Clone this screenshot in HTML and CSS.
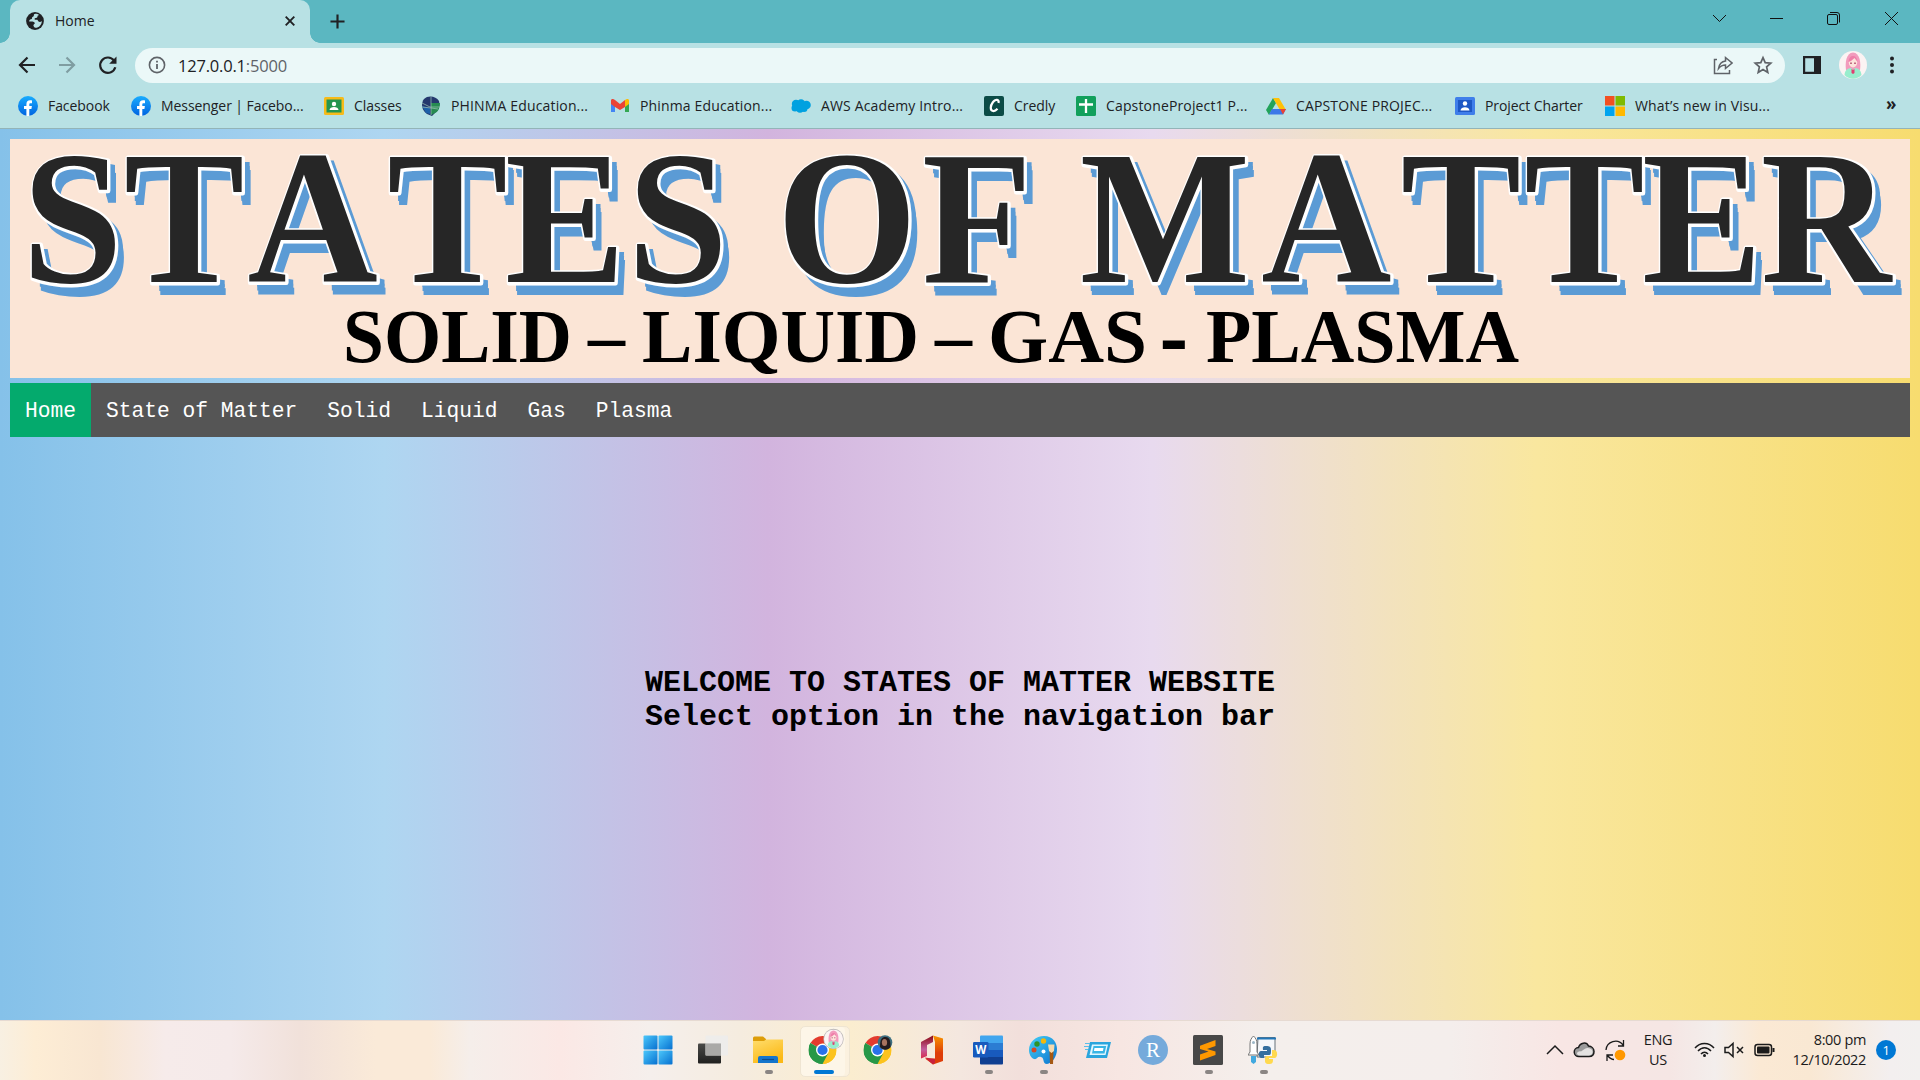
FILE: index.html
```html
<!DOCTYPE html>
<html lang="en">
<head>
<meta charset="utf-8">
<title>Home</title>
<link rel="stylesheet" href="styles.css">
</head>
<body>
<svg width="0" height="0" class="defs" aria-hidden="true">
  <defs>
    <linearGradient id="fbg" x2="0" y2="1"><stop stop-color="#18acfe"/><stop offset="1" stop-color="#0163e0"/></linearGradient>
    <linearGradient id="wing" x2="1" y2="1"><stop stop-color="#4cc8fb"/><stop offset="1" stop-color="#0670d0"/></linearGradient>
    <linearGradient id="fold" x2=".5" y2="1"><stop stop-color="#ffdd6d"/><stop offset="1" stop-color="#fbb916"/></linearGradient>
    <linearGradient id="offg" x2="0" y2="1"><stop stop-color="#f89500"/><stop offset=".6" stop-color="#de3d08"/></linearGradient>
    <linearGradient id="offl" x2="0" y2="1"><stop stop-color="#8c0a12"/><stop offset=".6" stop-color="#c25d9c"/><stop offset="1" stop-color="#d8294b"/></linearGradient>
    <linearGradient id="pal" x2="1" y2="1"><stop stop-color="#45d0f6"/><stop offset="1" stop-color="#0a72cf"/></linearGradient>
    <linearGradient id="tv" x2="0" y2="1"><stop stop-color="#4a4a48"/><stop offset="1" stop-color="#20201f"/></linearGradient>
    <symbol id="fb" viewBox="0 0 20 20"><circle cx="10" cy="10" r="10" fill="url(#fbg)"/><path d="M8.400 20v-7H6v-3h2.400V8.300c0-2.600 1.300-4 3.700-4 .8 0 1.500.1 1.900.2V7.200h-1.300c-1.100 0-1.400.5-1.400 1.400V10h2.600l-.5 3h-2.100v7z" fill="#fff"/></symbol>
    <symbol id="chrome" viewBox="0 0 28 28"><path d="M14 14 1.900 7A14 14 0 0 1 26.100 7z" fill="#e33b2e"/><path d="M14 14 26.100 7A14 14 0 0 1 14 28z" fill="#fcc31e"/><path d="M14 14v14A14 14 0 0 1 1.900 7z" fill="#279847"/><path d="M14 7.500h12.400A14 14 0 0 1 14 28l5.600-10.500z" fill="#fcc31e"/><path d="M1.900 7 8.400 17.200 14 20l5.600-2.500L14 28A14 14 0 0 1 1.900 7z" fill="#279847"/><circle cx="14" cy="14" r="6.500" fill="#fff"/><circle cx="14" cy="14" r="5.100" fill="#2972ea"/></symbol>
    <symbol id="girl" viewBox="0 0 28 28"><circle cx="14" cy="14" r="14" fill="#fbf3f3"/><path d="M7 19C6 12 7 2 14 1.500 21 2 22 12 21 19l-3 2h-8z" fill="#f29bbd"/><ellipse cx="14" cy="11.500" rx="4.200" ry="5" fill="#fde3dc"/><path d="M9.500 11C10 6 12 5 14 5s4 1 4.500 6L15.500 7 12 10z" fill="#ee7fa9"/><path d="M12 11.500v1.500m4-1.500v1.500" stroke="#a73a5d" stroke-width="1.400"/><path d="M5.500 24c.5-5 3-6.500 6.500-7l2 2 2-2c3.500.5 6 2 6.500 7-5 5-12 5-17 0z" fill="#98edcd"/><path d="m12.500 18 1.500 1 1.500-1v4l-1.500 1-1.500-1z" fill="#df3f71"/></symbol>
  </defs>
</svg>

<header class="browser">
  <div class="tabs">
    <div class="tab">
      <svg class="globe" viewBox="0 0 18 18"><circle cx="9" cy="9" r="8.900" fill="#202124"/><path d="M9.500 1.800c-3 .5-.5 2-2.500 3-2 .5.200 2-2 2.500C3.500 7.500 3 9 3.200 9.500c1.800.3 3.800-.5 5.300 1 1.200 1.500-1.500 1.700-1 3.300.3 1.200 1 1.800 2 2 3.500 0 6.300-3 6.300-6.800-1.500 1.500-3.500 1-4-.5C11.500 7 9 8.500 8.500 7c.3-1.500 3-.5 3-2.500 0-1.200 1-1.200 1.500-1.500C12 2 10.500 1.800 9.500 1.800z" fill="#b8e1e4"/></svg>
      <span class="tab-title">Home</span>
      <svg class="tab-close" viewBox="0 0 10 10"><path d="m.7.7 8.600 8.600m0-8.600L.7 9.300" stroke="#202124" stroke-width="1.900"/></svg>
    </div>
    <svg class="plus" viewBox="0 0 16 16"><path d="M8 .5v15M.5 8h15" stroke="#202124" stroke-width="2.300"/></svg>
    <svg class="win-buttons" viewBox="0 0 190 20" fill="none" stroke="#111"><path d="m1 7 6.500 6.500L14 7M58 10.500h13"/><rect x="115.500" y="6.500" width="10" height="10" rx="1.500"/><path d="M118 4.500h7a2.500 2.500 0 0 1 2.500 2.500v7.500M173 4l13 13m0-13-13 13"/></svg>
  </div>

  <div class="toolbar">
    <svg class="nav-icons" viewBox="0 0 100 20" fill="none" stroke-width="2.200"><path d="M17 10H2m7.500-7.500L2 10l7.500 7.500" stroke="#202124"/><path d="M41 10h15m-7.500-7.500L56 10l-7.500 7.500" stroke="#7f9da1"/><path d="M96 5.500a7.700 7.700 0 1 0 1.300 6.800" stroke="#202124"/><path d="M98.500 1.500v7.300h-7.300z" fill="#202124"/></svg>
    <div class="omnibox">
      <svg class="info" viewBox="0 0 18 18"><circle cx="9" cy="9" r="7.600" fill="none" stroke="#5f6368" stroke-width="1.600"/><path d="M9 8v5M9 4.800v1.800" stroke="#5f6368" stroke-width="1.800"/></svg>
      <span class="url">127.0.0.1<span class="port">:5000</span></span>
      <svg class="share" viewBox="0 0 20 20" fill="none" stroke="#5f6368" stroke-width="1.500"><path d="M4 4.500H1.500v14h15V15M5.500 13.500c.7-4.500 3-7 7-7.500V2.500L19 8l-6.500 5.500V10c-3 0-5 1-7 3.500z"/></svg>
      <svg class="star" viewBox="0 0 20 20" fill="none" stroke="#5f6368" stroke-width="1.700"><path d="m10 2.600 2.200 5.100 5.600.5-4.200 3.700 1.200 5.500-4.800-2.900-4.800 2.900 1.200-5.500-4.200-3.700 5.600-.5z"/></svg>
    </div>
    <svg class="panel" viewBox="0 0 18 18"><path d="M0 0h18v18H0zm2.200 2.200v13.600H11V2.200z" fill="#202124" fill-rule="evenodd"/></svg>
    <svg class="avatar"><use href="#girl"/></svg>
    <svg class="dots" viewBox="0 0 6 18" fill="#202124"><circle cx="3" cy="2.500" r="2"/><circle cx="3" cy="9" r="2"/><circle cx="3" cy="15.500" r="2"/></svg>
  </div>

  <nav class="bookmarks">
    <a><svg><use href="#fb"/></svg>Facebook</a>
    <a><svg><use href="#fb"/></svg>Messenger | Facebo...</a>
    <a><svg viewBox="0 0 20 20"><rect y="1" width="20" height="18" rx="1.500" fill="#f7bb1a"/><path d="M2.500 3.500h15v13h-15z" fill="#23954f"/><circle cx="10" cy="8" r="2.200" fill="#fff"/><path d="M5.500 14c0-4 9-4 9 0z" fill="#fff"/></svg>Classes</a>
    <a class="wide"><svg viewBox="0 0 20 20"><path d="M3 3C7-1 15 0 18 5c1 5 0 8-3 11l-4 4-5-2C0 14 0 7 3 3z" fill="#24386d"/><path d="M10 7h9c0 5-2 9-5 10l-4 2z" fill="#278b51"/><path d="M1 10l8 2v6l-4-1z" fill="#1d60a8"/><path d="m1 7 8 4h10M10 1v18M1 11l9 1 7 1" stroke="#9fc5b7" fill="none" stroke-width=".7"/></svg>PHINMA Education...</a>
    <a class="wide"><svg viewBox="0 0 20 20"><path d="M1 5v11h4V8z" fill="#4285f4"/><path d="M15 8v8h4V5z" fill="#34a853"/><path d="M15 5.500V11l4-3V4.500C19 3 17 2.500 15 4z" fill="#fbbc04"/><path d="M1 4.500V8l4 3 5 3 5-3V4l-5 4-5-4C3 2.500 1 3 1 4.500z" fill="#ea4335"/></svg>Phinma Education...</a>
    <a class="wide"><svg viewBox="0 0 20 20"><g fill="#00a1e0"><circle cx="5" cy="8" r="4.200"/><circle cx="10" cy="7.500" r="4.200"/><circle cx="15.500" cy="9" r="4.300"/><circle cx="4" cy="12" r="3.500"/><circle cx="9" cy="13" r="3.700"/><circle cx="13" cy="12.500" r="3.500"/></g></svg>AWS Academy Intro...</a>
    <a><svg viewBox="0 0 20 20"><rect width="20" height="20" rx="2" fill="#0b4b46"/><path d="M14.500 7c1-3.500-3-4.500-5.500-1-3 4-3 8.500 0 9 1.500.2 3-.6 4.500-2.200" fill="none" stroke="#fff" stroke-width="2.200"/></svg>Credly</a>
    <a class="wide"><svg viewBox="0 0 20 20"><rect width="20" height="20" rx="1.500" fill="#12a05c"/><path d="M10 3v14M3 8.500h14" stroke="#fff" stroke-width="2.300"/></svg>CapstoneProject1 P...</a>
    <a class="wide"><svg viewBox="0 0 20 20"><path d="M7 2 0 14l3 5L10 7z" fill="#22a35a"/><path d="M7 2h6l7 12h-6z" fill="#ffc107"/><path d="M3 18.500 6 13h14l-3 5.500z" fill="#3c78e8"/><path d="M14 13h6l-3 5.500z" fill="#ea4335"/></svg>CAPSTONE PROJEC...</a>
    <a><svg viewBox="0 0 20 20"><rect y="1" width="20" height="18" rx="1.500" fill="#3f7eea"/><path d="M3 4h14v12H3z" fill="#1d57c5"/><circle cx="10" cy="7.500" r="2.200" fill="#fff"/><path d="M5.500 14.500c0-4.500 9-4.500 9 0z" fill="#fff"/></svg>Project Charter</a>
    <a class="wide"><svg viewBox="0 0 20 20"><path d="M0 0h9.500v9.500H0z" fill="#f25022"/><path d="M10.500 0H20v9.500h-9.500z" fill="#7fba00"/><path d="M0 10.500h9.500V20H0z" fill="#00a4ef"/><path d="M10.500 10.500H20V20h-9.500z" fill="#ffb900"/></svg>What’s new in Visu...</a>
    <b class="more">»</b>
  </nav>
</header>

<main class="page">
  <svg class="banner" viewBox="0 0 1900 239" role="img">
    <defs>
      <text id="title" font-size="190" y="143" transform="scale(.95 1)" x="13 120 250 397 521 650 807 960 1126 1317 1464 1594 1718 1843">STATESOFMATTER</text>
    </defs>
    <g fill="#5b9bd5">
      <use href="#title" x="8" y="5"/><use href="#title" x="8" y="9"/><use href="#title" x="9" y="13"/>
    </g>
    <use href="#title" x="1" y="1" class="outline"/>
    <use href="#title" fill="#262626"/>
    <g font-size="77" fill="#000">
      <text x="333" y="223" textLength="229" lengthAdjust="spacingAndGlyphs">SOLID</text>
      <text x="578" y="222" textLength="37" lengthAdjust="spacingAndGlyphs">–</text>
      <text x="632" y="223" textLength="277" lengthAdjust="spacingAndGlyphs">LIQUID</text>
      <text x="925" y="222" textLength="37" lengthAdjust="spacingAndGlyphs">–</text>
      <text x="978" y="223" textLength="159" lengthAdjust="spacingAndGlyphs">GAS</text>
      <text x="1151" y="224" stroke="#000" stroke-width="2">-</text>
      <text x="1196" y="223" textLength="313" lengthAdjust="spacingAndGlyphs">PLASMA</text>
    </g>
  </svg>
  <nav class="menu">
    <a class="active">Home</a><a>State of Matter</a><a>Solid</a><a>Liquid</a><a>Gas</a><a>Plasma</a>
  </nav>
  <h1 class="welcome">WELCOME TO STATES OF MATTER WEBSITE<br>Select option in the navigation bar</h1>
</main>

<footer class="taskbar">
  <div class="apps">
    <div class="app"><svg viewBox="0 0 30 30" fill="url(#wing)"><rect x=".5" y=".5" width="14" height="14" rx="1"/><rect x="15.500" y=".5" width="14" height="14" rx="1"/><rect x=".5" y="15.500" width="14" height="14" rx="1"/><rect x="15.500" y="15.500" width="14" height="14" rx="1"/></svg></div>
    <div class="app"><svg viewBox="0 0 30 30"><rect y="8.500" width="23" height="20" rx="1" fill="url(#tv)"/><rect x="7.500" y=".5" width="22.500" height="20" rx="1" fill="#ececec" opacity=".85"/><path d="M7.500 8.500H23v12H7.500z" fill="#aaa9a7"/></svg></div>
    <div class="app running"><svg viewBox="0 0 30 30"><path d="M0 3a1.500 1.500 0 0 1 1.500-1.500H10L13 4v5H0z" fill="#dd9d09"/><path d="M0 6h11l2-1.500h17V28H0z" fill="url(#fold)"/><path d="M5 28v-5a2 2 0 0 1 2-2h16a2 2 0 0 1 2 2v5z" fill="#1475cc"/><path d="M9 24.500h12" stroke="#0c4c8d" stroke-width="1.200"/></svg></div>
    <div class="app current"><svg viewBox="0 0 30 30" overflow="visible"><use href="#chrome" x=".5" y="1" width="28" height="28"/><circle cx="25.500" cy="4" r="10.200" fill="#b9b5b6"/><use href="#girl" x="16" y="-5.500" width="19" height="19"/></svg></div>
    <div class="app"><svg viewBox="0 0 30 30"><use href="#chrome" x=".5" y="1" width="28" height="28"/><circle cx="22" cy="7.500" r="7.300" fill="#3d6f80"/><path d="M17 12c0-8 2-10 5.500-10 5 0 5 6 5 10-3 4-8 3-10.500 0z" fill="#251b1e"/><ellipse cx="21.500" cy="7.500" rx="2.600" ry="3.600" fill="#a9735f"/></svg></div>
    <div class="app"><svg viewBox="0 0 30 30"><path d="M3 7 15 .5V7L9 10v11l-6 2.500z" fill="url(#offl)"/><path d="M15 .5 25 3.500v22.500l-10 3.500-8-6h10V7z" fill="url(#offg)"/><path d="m7 22.500 10 1.500v3.500l-2 2z" fill="#c9213c"/></svg></div>
    <div class="app running"><svg viewBox="0 0 30 30"><path d="M7 1.500A1 1 0 0 1 8 .5h21a1 1 0 0 1 1 1v6.500H7z" fill="#41a5ee"/><path d="M7 8h23v7H7z" fill="#2b7cd3"/><path d="M7 15h23v7H7z" fill="#185abd"/><path d="M7 22h23v6.500a1 1 0 0 1-1 1H8a1 1 0 0 1-1-1z" fill="#103f91"/><rect y="7" width="15.500" height="15.500" rx="1.300" fill="#185abd"/><text x="7.700" y="19" text-anchor="middle" class="word-letter">W</text></svg></div>
    <div class="app running"><svg viewBox="0 0 30 30"><path d="M1 15C1 7 8 1 16 1c9 0 13 7 13 13 0 8-5 14-10 15-5 0-2-6-6-7-4-1-4 3-7 2-3-1-5-5-5-9z" fill="url(#pal)"/><circle cx="15.500" cy="6" r="2.700" fill="#f2b80b"/><circle cx="9" cy="9" r="2.700" fill="#2e9329"/><circle cx="6" cy="15" r="2.500" fill="#d44825"/><circle cx="15.500" cy="16.500" r="2" fill="#fff"/><path d="M21.500 15h4l-.5 14h-3z" fill="#a55813"/><path d="M20 9.500h6.500L26 16l-2.500 2-2.500-2z" fill="#f4d9ae"/></svg></div>
    <div class="app"><svg viewBox="0 0 30 30"><path d="M7 7h21l-4 16H3z" fill="#2aa5dd"/><path d="M9 9.500h16L22.500 20h-16z" fill="#dff6ff"/><path d="M10.500 11h12.700l-1.700 7.500H9z" fill="#38b5e5"/><path d="M11.500 13h9l-.6 3h-9z" fill="#fff"/><path d="M2 8.500h5M1 11.500h5M2 14.500h3" stroke="#58bdea" stroke-width="1.200"/></svg></div>
    <div class="app"><svg viewBox="0 0 30 30"><circle cx="15" cy="15" r="15" fill="#75aadb"/><text x="15" y="22" text-anchor="middle" class="r-letter">R</text></svg></div>
    <div class="app running"><svg viewBox="0 0 30 30"><rect width="30" height="30" rx="1.500" fill="#484848"/><path d="M7 10.800 22.500 5v6L14 14l8.500 2.500V20L7 25.500v-6l8.500-3L7 14z" fill="#ff9800"/></svg></div>
    <div class="app running"><svg viewBox="0 0 30 30"><path d="M10 2.500h17V22H9z" fill="#f5f7fa" stroke="#67727a"/><path d="M9 3.500h19" stroke="#2177b9" stroke-width="2"/><path d="M2 17V9c0-4 1.500-6 3.500-8C7.500 3 9 5 9 9v8l2 3H0z" fill="#fff" stroke="#777"/><circle cx="5.500" cy="7.500" r="1.500" fill="#9cb7c7"/><path d="M3 21h5v6l-2.500 2L3 27z" fill="#42a9df"/><path d="M18 11c-4 0-3 2-3 4h4v1h-6c-3 0-3 6 0 7h3v-3h5c2 0 2-2 2-5s-1-4-5-4z" fill="#356f9f"/><path d="M24 15h2c4 0 4 7 1 8h-6v1h4c0 3 0 5-4 5s-4-2-4-4 0-4 3-4h4z" fill="#ffd94e"/></svg></div>
  </div>
  <div class="tray">
    <svg class="tray-left" viewBox="0 0 80 24" fill="none"><path d="m1 16 8-8 8 8" stroke="#1b1b1b" stroke-width="1.500"/><path d="M33 18.500a4.500 4.500 0 0 1-.5-9c1.500-5 8-6 10-1.500 3 .2 5.500 2.500 5.500 5.500 0 3-2 5-5 5z" fill="#9b9b9b" stroke="#1b1b1b" stroke-width="1.500"/><path d="M34 17.500c-5 0-3-5 1-4 2-1 4-4 7-3.500 6 .5 6 7 1 7.500z" fill="#e4e2e1"/><path d="M60 12a9.500 9.500 0 0 1 17-5m.5-5v6H72M68 21.500c-3 0-5-2-7-4.500m0 6v-6h6" stroke="#1b1b1b" stroke-width="1.300"/><circle cx="74" cy="17" r="5.300" fill="#ff9800"/></svg>
    <div class="lang">ENG<br>US</div>
    <svg class="tray-right" viewBox="0 0 82 24" fill="none" stroke="#1b1b1b" stroke-width="1.500"><path d="M1 10c5-6 14-6 19 0M4 13c4-4.500 9-4.500 13 0M7 16c2-2.500 5-2.500 7 0"/><circle cx="10.500" cy="17.500" r="1.500" fill="#1b1b1b" stroke="none"/><path d="M31 9.500h3.500L39 5.500v13l-4.500-4H31zM43 9l6 6m0-6-6 6"/><rect x="61" y="6.500" width="16.500" height="11" rx="2.500"/><rect x="63" y="8.500" width="12.500" height="7" rx="1" fill="#1b1b1b" stroke="none"/><path d="M79.500 10v4" stroke-width="2"/></svg>
    <div class="clock">8:00 pm<br>12/10/2022</div>
    <span class="badge">1</span>
  </div>
</footer>
</body>
</html>
```
FILE: styles.css
```css
* { box-sizing: border-box; }

body {
  margin: 0;
  width: 1920px;
  height: 1080px;
  overflow: hidden;
  display: flex;
  flex-direction: column;
  font-family: "Open Sans", "Noto Sans", sans-serif;
  font-size: 14px;
  color: #202124;
}

svg { display: block; flex: none; }
.defs { position: absolute; }

/* Browser window */
.browser { height: 129px; background: #b8e1e4; border-bottom: 1px solid #93b4b8; }

.tabs { height: 43px; display: flex; align-items: center; background: #5bb7c1; padding-left: 10px; }
.tab {
  position: relative;
  width: 300px;
  height: 43px;
  display: flex;
  align-items: center;
  padding: 0 15px 2px 16px;
  background: #b8e1e4;
  border-radius: 10px 10px 0 0;
}
.tab::before, .tab::after {
  content: "";
  position: absolute;
  bottom: 0;
  width: 10px;
  height: 10px;
}
.tab::before { left: -10px; background: radial-gradient(circle at 0 0, transparent 9.5px, #b8e1e4 10px); }
.tab::after { right: -10px; background: radial-gradient(circle at 100% 0, transparent 9.5px, #b8e1e4 10px); }
.globe { width: 18px; height: 18px; }
.tab-title { margin-left: 11px; }
.tab-close { width: 10px; height: 10px; margin-left: auto; }
.plus { width: 15px; height: 15px; margin: 0 0 1px 20px; }
.win-buttons { width: 190px; height: 20px; margin: 0 18px 7px auto; }

.toolbar { height: 45px; display: flex; align-items: center; padding: 0 25px 0 18px; }
.nav-icons { width: 100px; height: 20px; margin-bottom: 1px; }
.omnibox {
  width: 1650px;
  height: 35px;
  margin-left: 17px;
  padding: 0 12px 1px 13px;
  display: flex;
  align-items: center;
  background: #ebf8f8;
  border-radius: 18px;
}
.info { width: 18px; height: 18px; }
.url { margin-left: 12px; font-size: 16.5px; letter-spacing: -.2px; }
.port { color: #5f6368; }
.share { width: 20px; height: 20px; margin-left: auto; }
.star { width: 20px; height: 20px; margin-left: 20px; }
.panel { width: 18px; height: 18px; margin: 0 0 1px 18px; }
.avatar { width: 28px; height: 28px; margin: 0 0 1px 18px; }
.dots { width: 6px; height: 18px; margin: 0 0 1px 22px; }

.bookmarks {
  height: 35px;
  padding-left: 18px;
  display: grid;
  grid-template-columns: 113px 193px 97px 189px 181px 193px 92px 190px 189px 150px 281px 30px;
  align-items: center;
  letter-spacing: -.07px;
}
.bookmarks a { display: flex; align-items: center; white-space: nowrap; }
.bookmarks .wide { letter-spacing: .15px; }
.bookmarks svg { width: 20px; height: 20px; margin-right: 10px; }
.more { font-size: 17px; padding-bottom: 4px; }

/* Web page */
.page {
  height: 891px;
  padding: 10px;
  background: linear-gradient(to right, #85c1e9, #aed6f1, #d2b4de, #e8daef, #f9e79f, #f7dc6f);
  font-family: "Liberation Mono", "Courier New", monospace;
}
.banner {
  width: 1900px;
  height: 239px;
  background: #fbe5d6;
  font-family: "Liberation Serif", "Times New Roman", serif;
  font-weight: bold;
}
.outline { fill: #fff; stroke: #fff; stroke-width: 5px; stroke-linejoin: round; }
.menu { height: 54px; margin-top: 5px; display: flex; background: #555; color: #fff; font-size: 21.25px; line-height: 24px; }
.menu a { padding: 16px 15px 14px; }
.menu .active { background: #04aa6d; }
.welcome { margin: 229px 0 0; text-align: center; font-size: 30px; line-height: 34px; color: #000; }

/* Taskbar */
.taskbar {
  height: 60px;
  display: flex;
  border-top: 1px solid #e6dad2;
  background: linear-gradient(to right, #f8f0e2 0, #fdedd5 35px, #f8e6d2 100px, #f6ebea 165px, #f5eaea 230px, #f1e1da 300px, #faead8 375px, #faead8 430px, #f5eeea 470px, #fbe8e5 560px, #f5efec 650px, #f5ecdf 740px, #fbedcf 850px, #f4e7df 960px, #f2dfdb 1020px, #f7e6e2 1120px, #f4efec 1260px, #f4eeec 1450px, #f8e6e4 1560px, #f5e6e4 1670px, #f3eeec 1715px, #fbe9d4 1760px, #f9e8d3 1810px, #f3efef 1890px, #f2f0ef 1920px);
}
.apps { display: flex; margin-left: 631px; }
.app { position: relative; width: 55px; height: 59px; padding: 14px 0 0 12px; }
.app svg { position: relative; width: 30px; height: 30px; }
.running::after, .current::after {
  content: "";
  position: absolute;
  left: 24px;
  top: 49px;
  width: 8px;
  height: 4px;
  border-radius: 2px;
  background: #8a8583;
}
.current::after { left: 18px; width: 20px; background: #0078d4; }
.current::before {
  content: "";
  position: absolute;
  left: 4px;
  top: 5px;
  width: 48px;
  height: 49px;
  border: 1px solid #efe5d2;
  border-radius: 5px;
  background: #fdf6e8;
  box-shadow: inset -4px 0 #fbf1df;
}
.word-letter { font: bold 11.5px "Open Sans", sans-serif; fill: #fff; }
.r-letter { font: 21px "Liberation Serif", serif; fill: #fff; }

.tray { display: flex; align-items: center; margin-left: auto; padding: 0 24px 2px 0; font-size: 14.5px; line-height: 19.5px; color: #1b1b1b; letter-spacing: -.35px; }
.tray-left { width: 80px; height: 24px; }
.lang { width: 30px; margin-left: 17px; text-align: center; white-space: nowrap; }
.tray-right { width: 82px; height: 24px; margin-left: 21px; }
.clock { width: 80px; margin-left: 10px; text-align: right; white-space: nowrap; }
.badge { width: 20px; height: 20px; margin-left: 10px; border-radius: 50%; background: #0078d4; color: #fff; text-align: center; font-size: 13px; line-height: 20px; }
```
